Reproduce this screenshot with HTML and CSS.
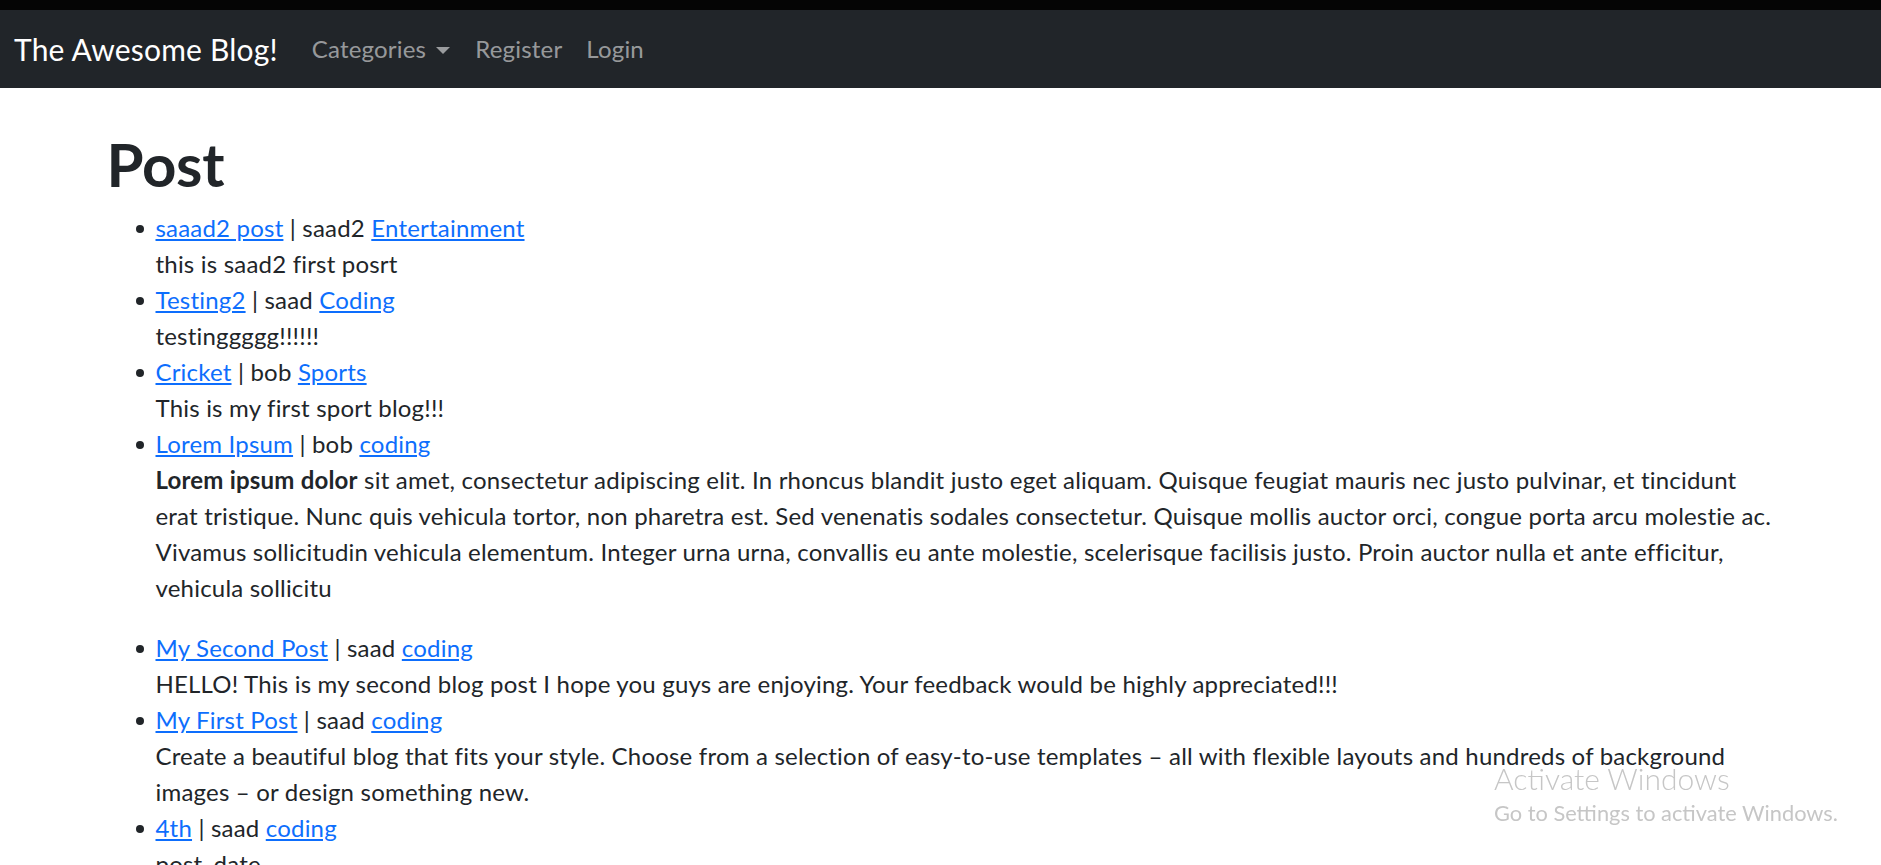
FILE: index.html
```html
<!DOCTYPE html>
<html lang="en">
<head>
<meta charset="utf-8">
<title>The Awesome Blog!</title>
<link rel="stylesheet" href="styles.css">
</head>
<body>
<div class="topbar"></div>
<nav class="navbar">
  <a class="brand" href="#">The Awesome Blog!</a>
  <ul class="nav">
    <li><a class="nav-link dropdown" href="#">Categories<span class="caret"></span></a></li>
    <li><a class="nav-link" href="#">Register</a></li>
    <li><a class="nav-link" href="#">Login</a></li>
  </ul>
</nav>
<main class="container">
  <h1 class="title">Post</h1>
  <ul class="posts">
    <li><a href="#">saaad2 post</a> | saad2 <a href="#">Entertainment</a><br>this is saad2 first posrt</li>
    <li><a href="#">Testing2</a> | saad <a href="#">Coding</a><br>testinggggg!!!!!!</li>
    <li><a href="#">Cricket</a> | bob <a href="#">Sports</a><br>This is my first sport blog!!!</li>
    <li><a href="#">Lorem Ipsum</a> | bob <a href="#">coding</a><br><p class="body-p"><strong>Lorem ipsum dolor</strong> sit amet, consectetur adipiscing elit. In rhoncus blandit justo eget aliquam. Quisque feugiat mauris nec justo pulvinar, et tincidunt erat tristique. Nunc quis vehicula tortor, non pharetra est. Sed venenatis sodales consectetur. Quisque mollis auctor orci, congue porta arcu molestie ac. Vivamus sollicitudin vehicula elementum. Integer urna urna, convallis eu ante molestie, scelerisque facilisis justo. Proin auctor nulla et ante efficitur, vehicula sollicitu</p></li>
    <li><a href="#">My Second Post</a> | saad <a href="#">coding</a><br>HELLO! This is my second blog post I hope you guys are enjoying. Your feedback would be highly appreciated!!!</li>
    <li><a href="#">My First Post</a> | saad <a href="#">coding</a><br>Create a beautiful blog that fits your style. Choose from a selection of easy-to-use templates – all with flexible layouts and hundreds of background images – or design something new.</li>
    <li><a href="#">4th</a> | saad <a href="#">coding</a><br>post_date</li>
  </ul>
</main>
<div class="activate">
  <div class="act-title">Activate Windows</div>
  <div class="act-sub">Go to Settings to activate Windows.</div>
</div>
</body>
</html>
```
FILE: styles.css
```css
*, *::before, *::after {
  box-sizing: border-box;
}
html, body {
  margin: 0;
  padding: 0;
}
body {
  font-family: Lato, "Liberation Sans", sans-serif;
  font-size: 24px;
  line-height: 36px;
  letter-spacing: 0.2px;
  color: #212529;
  background: #fff;
  overflow: hidden;
  height: 865px;
}
.topbar {
  height: 10px;
  background: #050505;
}
.navbar {
  height: 78px;
  background: #212529;
  display: flex;
  align-items: center;
  padding: 0 14px;
  letter-spacing: 0.2px;
}
.brand {
  color: #fff;
  text-decoration: none;
  font-size: 30px;
  line-height: 45px;
  margin-right: 22px;
}
.nav {
  display: flex;
  list-style: none;
  margin: 0;
  padding: 0;
}
.nav-link {
  display: flex;
  align-items: center;
  padding: 0 12px;
  color: rgba(255, 255, 255, 0.55);
  text-decoration: none;
  font-size: 24px;
  line-height: 36px;
}
.dropdown {
  padding-right: 13px;
}
.caret {
  display: inline-block;
  margin-left: 10px;
  margin-top: 2px;
  border-top: 7px solid rgba(255, 255, 255, 0.55);
  border-left: 7px solid transparent;
  border-right: 7px solid transparent;
}
.container {
  max-width: 1710px;
  margin: 0 auto;
  padding: 0 18px 0 21px;
}
.title {
  font-size: 60px;
  line-height: 72px;
  font-weight: 700;
  letter-spacing: -0.3px;
  margin: 40px 0 10px 0;
}
.posts {
  margin: 0;
  padding-left: 49px;
  list-style: none;
}
.posts > li {
  position: relative;
}
.posts > li::before {
  content: "";
  position: absolute;
  left: -20px;
  top: 15px;
  width: 8px;
  height: 8px;
  border-radius: 50%;
  background: #212529;
}
.posts a {
  color: #0d6efd;
  text-decoration: underline;
  text-underline-offset: 2px;
}
.body-p {
  margin: 0 0 24px 0;
}
.activate {
  position: fixed;
  left: 1494px;
  top: 760px;
  color: #c6c6c6;
  letter-spacing: 0;
}
.act-title {
  font-size: 30px;
  line-height: 36px;
  font-weight: 300;
}
.act-sub {
  font-size: 21.8px;
  line-height: 30px;
  margin-top: 2px;
}
```
